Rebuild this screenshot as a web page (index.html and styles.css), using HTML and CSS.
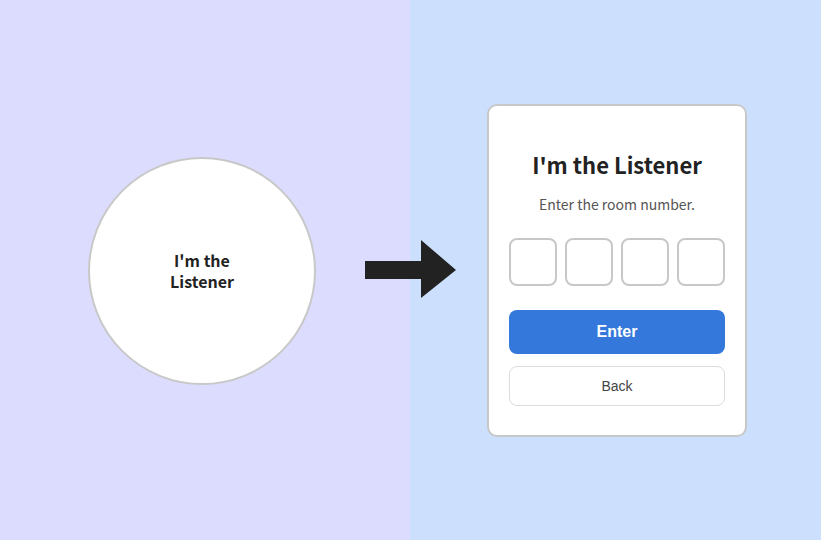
FILE: index.html
```html
<!DOCTYPE html>
<html lang="en">
<head>
    <meta charset="UTF-8">
    <meta name="viewport" content="width=device-width, initial-scale=1.0">
    <title>Listener</title>
    <link rel="stylesheet" href="styles.css">
</head>
<body>
    <div class="stage">
        <!-- Step 1: pick a role -->
        <div class="panel panel-left">
            <div class="role-circle">
                <span>I'm the</span>
                <span>Listener</span>
            </div>
        </div>

        <!-- Step 2: enter the room -->
        <div class="panel panel-right">
            <div class="card">
                <h1>I'm the Listener</h1>
                <p class="hint">Enter the room number.</p>
                <div class="code-boxes">
                    <input type="text" maxlength="1">
                    <input type="text" maxlength="1">
                    <input type="text" maxlength="1">
                    <input type="text" maxlength="1">
                </div>
                <button class="btn-enter">Enter</button>
                <button class="btn-back">Back</button>
            </div>
        </div>

        <svg class="arrow" width="92" height="60" viewBox="0 0 92 60">
            <polygon points="0,21 56,21 56,0 91,30 56,58 56,39 0,39" fill="#222"/>
        </svg>
    </div>
</body>
</html>
```

FILE: styles.css
```css
body {
    margin: 0;
    padding: 0;
    font-family: "Noto Sans CJK KR", "Noto Sans", sans-serif;
}
.stage {
    position: relative;
    display: flex;
    width: 821px;
    height: 540px;
}
.panel {
    display: flex;
    align-items: center;
    justify-content: center;
    height: 100%;
}
.panel-left {
    width: 410px;
    background-color: #dcdcfe;
    padding-right: 6px;
    padding-top: 2px;
    box-sizing: border-box;
}
.panel-right {
    width: 411px;
    background-color: #cce0fe;
    padding-left: 3px;
    box-sizing: border-box;
}
.role-circle {
    width: 224px;
    height: 224px;
    border-radius: 50%;
    background: #fff;
    border: 2px solid #c8c8c8;
    display: flex;
    flex-direction: column;
    align-items: center;
    justify-content: center;
    text-align: center;
}
.role-circle span {
    display: block;
    font-size: 16px;
    font-weight: bold;
    line-height: 21px;
    color: #222;
}
.card {
    width: 216px;
    background: #fff;
    border: 2px solid #c8c8c8;
    border-radius: 10px;
    padding: 43px 20px 29px;
    display: flex;
    flex-direction: column;
}
h1 {
    margin: 0;
    font-size: 22px;
    line-height: 30px;
    text-align: center;
    color: #222;
}
.hint {
    margin: 15px 0 0;
    font-size: 14px;
    line-height: 20px;
    text-align: center;
    color: #555;
}
.code-boxes {
    display: flex;
    gap: 8px;
    margin-top: 24px;
}
.code-boxes input {
    width: 48px;
    height: 48px;
    box-sizing: border-box;
    border: 2px solid #c8c8c8;
    border-radius: 8px;
    padding: 0;
    text-align: center;
    font-size: 20px;
}
.btn-enter {
    margin-top: 24px;
    height: 44px;
    border: none;
    border-radius: 8px;
    background-color: #3578db;
    color: #fff;
    font-family: "Liberation Sans", Arial, sans-serif;
    font-size: 16px;
    font-weight: bold;
}
.btn-back {
    margin-top: 12px;
    height: 40px;
    border: 1px solid #ddd;
    border-radius: 8px;
    background: #fff;
    color: #444;
    font-family: "Liberation Sans", Arial, sans-serif;
    font-size: 14px;
}
.arrow {
    position: absolute;
    left: 365px;
    top: 240px;
}
```
